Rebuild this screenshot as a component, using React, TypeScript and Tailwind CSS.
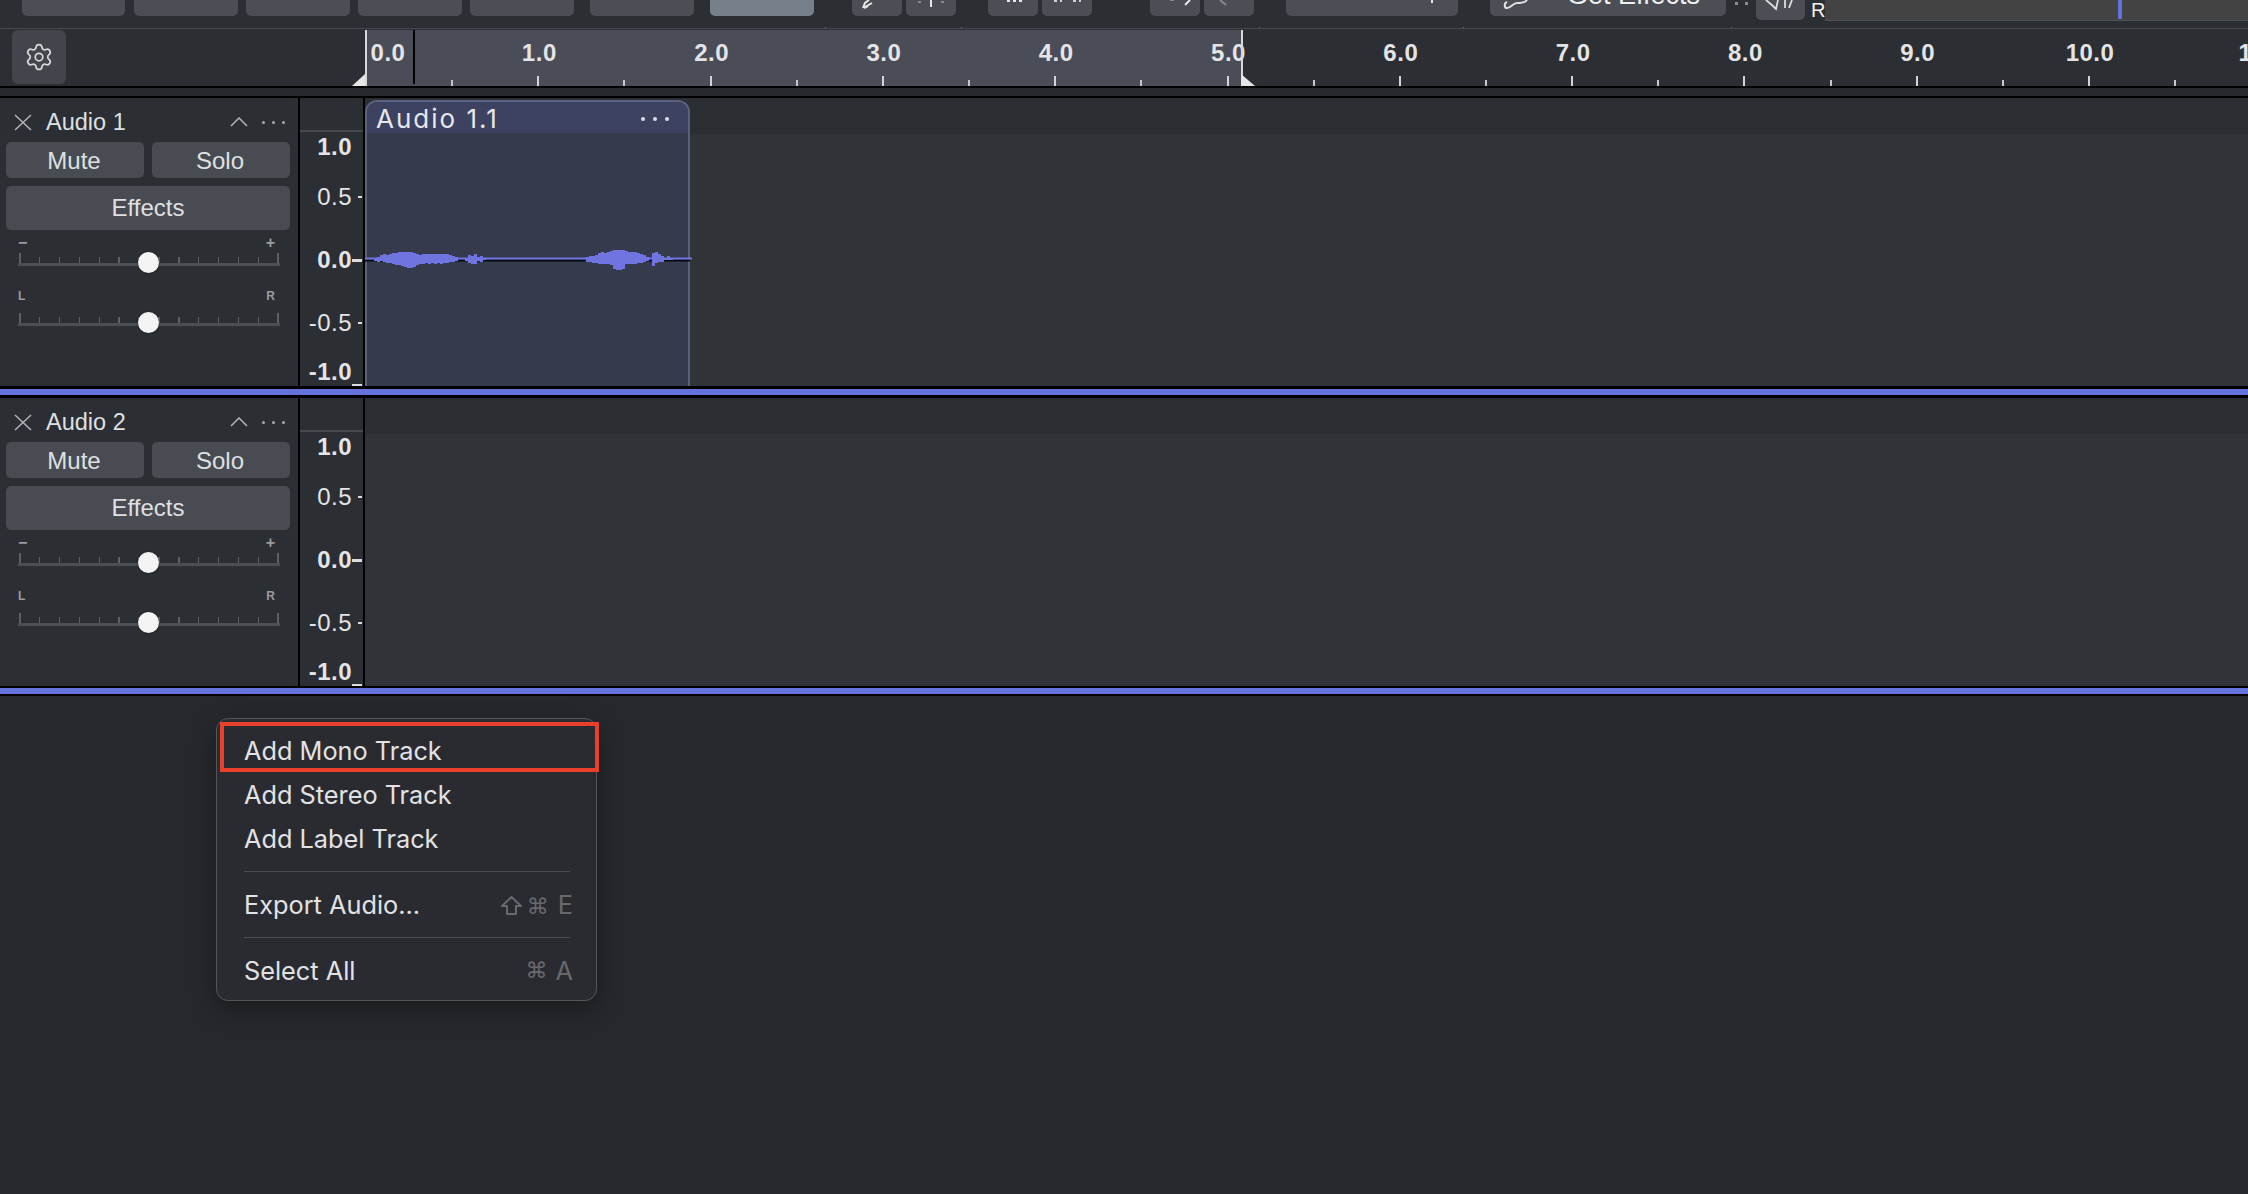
import { Settings } from "lucide-react";
import type { ReactNode } from "react";

const TICK_STEP = 172.3;
const rulerLabels = [0, 1, 2, 3, 4, 5, 6, 7, 8, 9, 10, 11];
const scaleLabels = [
  { text: "1.0", top: 37, bold: true },
  { text: "0.5", top: 87, bold: false },
  { text: "0.0", top: 150, bold: true },
  { text: "-0.5", top: 213, bold: false },
  { text: "-1.0", top: 262, bold: true },
];
const scaleMarks = [
  { top: 98, width: 4, left: 58 },
  { top: 161, width: 10, left: 52 },
  { top: 224, width: 4, left: 58 },
  { top: 286, width: 10, left: 52 },
];
// [x, up, down] around the zero line, 3px wide columns
const waveColumns = [
  [374, 1, 2], [377, 2, 3], [380, 4, 2], [383, 5, 3], [386, 4, 4], [389, 5, 4], [392, 6, 5], [395, 6, 6],
  [398, 7, 6], [401, 7, 7], [404, 7, 8], [407, 7, 9], [410, 7, 9], [413, 6, 8], [416, 5, 6], [419, 4, 5],
  [422, 5, 5], [425, 5, 4], [428, 5, 5], [431, 5, 4], [434, 5, 5], [437, 5, 4], [440, 5, 5], [443, 5, 4],
  [446, 5, 4], [449, 4, 3], [452, 3, 3], [455, 2, 2],
  [465, 1, 2], [468, 4, 4], [471, 3, 5], [474, 5, 5], [477, 2, 2], [480, 3, 3], [483, 1, 1],
  [586, 2, 3], [589, 3, 3], [592, 3, 4], [595, 4, 4], [598, 6, 5], [601, 7, 5], [604, 6, 5], [607, 7, 5],
  [610, 8, 6], [613, 9, 10], [616, 9, 11], [619, 9, 11], [622, 9, 10], [625, 8, 5], [628, 7, 5], [631, 7, 5],
  [634, 7, 5], [637, 6, 4], [640, 5, 4], [643, 4, 3], [646, 2, 2],
  [652, 6, 7], [655, 7, 4], [658, 5, 3], [661, 3, 3], [664, 1, 1], [667, 3, 1], [670, 1, 1],
];

function ToolButton({ className, children }: { className: string; children?: ReactNode }) {
  return (
    <div className={`relative h-4 shrink-0 overflow-hidden rounded-b-[5px] bg-[#4b4e55] ${className}`}>{children}</div>
  );
}

function Toolbar() {
  return (
    <div className="relative flex h-[29px] items-start border-b border-[#45484d] pl-[22px] shrink-0">
      <ToolButton className="w-[103px]" />
      <ToolButton className="ml-[9px] w-[104px]" />
      <ToolButton className="ml-2 w-[104px]" />
      <ToolButton className="ml-2 w-[104px]" />
      <ToolButton className="ml-2 w-[104px]" />
      <ToolButton className="ml-4 w-[104px]" />
      <ToolButton className="ml-4 w-[104px] bg-[#76808a]" />
      <ToolButton className="ml-[38px] w-[50px]">
        <svg width="50" height="16" fill="none" stroke="#e8e8e8" strokeWidth="2">
          <path d="M11 8 L13 3 L17 0 M13 7 L20 3 M12 8 L16 6" />
        </svg>
      </ToolButton>
      <ToolButton className="ml-1 w-[50px]">
        <svg width="50" height="16" fill="none">
          <path d="M25 0 V7" stroke="#e8e8e8" strokeWidth="2" />
          <path d="M12 2 H15 M35 2 H38" stroke="#85888e" strokeWidth="2" />
        </svg>
      </ToolButton>
      <ToolButton className="ml-8 w-[50px]">
        <svg width="50" height="16" fill="none">
          <path d="M19 1 H22 M25 1 H28 M31 1 H34" stroke="#e8e8e8" strokeWidth="2" />
        </svg>
      </ToolButton>
      <ToolButton className="ml-1 w-[50px]">
        <svg width="50" height="16" fill="none">
          <path d="M12 1 H15 M18 1 H20 M31 1 H34 M37 1 H39" stroke="#d0d0d0" strokeWidth="2" />
        </svg>
      </ToolButton>
      <ToolButton className="ml-[58px] w-[50px]">
        <svg width="50" height="16" fill="none">
          <path d="M40 0 L35 5" stroke="#e8e8e8" strokeWidth="2" />
          <path d="M20 0 H24" stroke="#85888e" strokeWidth="2" />
        </svg>
      </ToolButton>
      <ToolButton className="ml-1 w-[50px]">
        <svg width="50" height="16" fill="none">
          <path d="M16 0 L22 5" stroke="#85888e" strokeWidth="2" />
        </svg>
      </ToolButton>
      <ToolButton className="ml-8 w-[172px]">
        <div className="absolute left-[145px] top-0 h-[3px] w-[2px] bg-[#e8e8e8]" />
      </ToolButton>
      <ToolButton className="ml-8 flex w-[236px] items-end pb-[7px]">
        <svg className="absolute left-[13px] top-0" width="28" height="16" fill="none" stroke="#e0e0e0" strokeWidth="2">
          <path d="M24 0 C22 3 18 3 14 3 C10 3 8 8 4 8 C1 8 1 3 4 2" />
        </svg>
        <span className="ml-[77px] whitespace-nowrap text-[27px] leading-[27px] text-[#f0f0f0]">Get Effects</span>
      </ToolButton>
      <div className="ml-[9px] flex gap-[7px] pt-[2px]">
        <div className="h-[3px] w-[3px] bg-[#8a8d92]" />
        <div className="h-[3px] w-[3px] bg-[#8a8d92]" />
      </div>
      <div className="relative ml-[8px] h-5 w-[49px] shrink-0 overflow-hidden rounded-b-[5px] bg-[#4b4e55]">
        <svg width="49" height="20" fill="none" stroke="#dcdcdc" strokeWidth="1.8">
          <path d="M10 0 L17 6 L20 9 L22 0 M29 0 V8 M36 0 L33 8" />
        </svg>
      </div>
      <span className="ml-[6px] text-[20px] leading-[20px] text-[#f2f2f2]">R</span>
      <div className="relative h-[21px] flex-1 border-b border-[#4d5058] bg-[#434343]">
        <div className="absolute left-[293px] top-0 h-[19px] w-[4px] bg-[#6672dc]" />
      </div>
      <div className="absolute left-[825px] top-[27px] h-px w-px bg-[#6a6d72]" />
      <div className="absolute left-[961px] top-[27px] h-px w-px bg-[#6a6d72]" />
      <div className="absolute left-[1259px] top-[27px] h-px w-px bg-[#6a6d72]" />
      <div className="absolute left-[1463px] top-[27px] h-px w-px bg-[#6a6d72]" />
      <div className="absolute left-[1731px] top-[27px] h-px w-px bg-[#6a6d72]" />
    </div>
  );
}

function Ruler() {
  return (
    <div className="mt-px flex h-[56px] shrink-0">
      <div className="w-[365px] shrink-0 pl-3">
        <div className="flex h-[54px] w-[54px] items-center justify-center rounded-[6px] bg-[#42454c]">
          <Settings size={30} strokeWidth={1.4} color="#d8d8d8" />
        </div>
      </div>
      <div className="relative flex-1">
        <div className="absolute left-0 top-0 h-full w-[876px] bg-[#4a4c57]" />
        {rulerLabels.map((value) => (
          <span
            key={value}
            className="absolute top-[11px] -translate-x-1/2 whitespace-nowrap text-[24px] font-bold leading-[24px] tracking-[0.5px] text-[#e4e4e6]"
            style={{ left: value === 0 ? 23 : value * TICK_STEP + 2 }}
          >
            {value.toFixed(1)}
          </span>
        ))}
        {rulerLabels.map((value) => (
          <div key={value}>
            {value > 0 && <div className="absolute bottom-0 h-[10px] w-[2px] bg-[#d4d4d6]" style={{ left: value * TICK_STEP }} />}
            <div className="absolute bottom-0 h-[6px] w-[2px] bg-[#c8c8ca]" style={{ left: (value + 0.5) * TICK_STEP }} />
          </div>
        ))}
        <div className="absolute left-0 top-0 h-full w-[2px] bg-[#d8d8da]" />
        <div className="absolute left-[48px] top-0 h-[54px] w-[2px] bg-black" />
        <div className="absolute left-[876px] top-0 h-full w-[2px] bg-[#d8d8da]" />
        <svg className="absolute bottom-0 left-[-13px]" width="13" height="12">
          <path d="M13 0 V12 H0 Z" fill="#e6e6e6" />
        </svg>
        <svg className="absolute bottom-0 left-[876px]" width="14" height="12">
          <path d="M0 0 V12 H14 Z" fill="#e6e6e6" />
        </svg>
      </div>
    </div>
  );
}

function Slider({ left, right, labelClass, gap }: { left: string; right: string; labelClass: string; gap: string }) {
  const ticks = Array.from({ length: 14 }, (_, i) => i);
  return (
    <div className="w-[262px]">
      <div className={`flex h-[14px] items-center justify-between pr-[5px] text-[#9a9ca0] ${labelClass}`}>
        <span>{left}</span>
        <span>{right}</span>
      </div>
      <div className={`relative ${gap}`}>
        <div className="flex h-[10px] items-end justify-between px-px">
          {ticks.map((i) => (
            <div key={i} className={`w-[1.5px] bg-[#5d6067] ${i === 0 || i === 13 ? "h-[10px]" : "h-[6px]"}`} />
          ))}
        </div>
        <div className="h-[3px] w-full bg-[#4b4e55]" />
        <div className="absolute left-[120px] top-[-1px] h-[21px] w-[21px] rounded-full bg-[#f4f4f4] shadow-[0_0_2px_rgba(0,0,0,0.6)]" />
      </div>
    </div>
  );
}

function TrackHeader({ name }: { name: string }) {
  return (
    <div className="w-[298px] shrink-0 pl-[6px]">
      <div className="flex h-[44px] items-center pt-[4px]">
        <svg className="ml-[8px]" width="18" height="17" fill="none" stroke="#b4b5b8" strokeWidth="1.5">
          <path d="M1 1 L17 16 M17 1 L1 16" />
        </svg>
        <span className="ml-[14px] text-[23.5px] leading-[26px] text-[#dfe0e2]">{name}</span>
        <svg className="ml-auto" width="18" height="10" fill="none" stroke="#b4b5b8" strokeWidth="1.5">
          <path d="M1 9 L9 1 L17 9" />
        </svg>
        <div className="ml-[14px] mr-[13px] flex gap-[7px]">
          <div className="h-[3px] w-[3px] rounded-full bg-[#a8a9ac]" />
          <div className="h-[3px] w-[3px] rounded-full bg-[#a8a9ac]" />
          <div className="h-[3px] w-[3px] rounded-full bg-[#a8a9ac]" />
        </div>
      </div>
      <div className="flex w-[284px] gap-2">
        <div className="flex h-9 flex-1 items-center justify-center rounded-[5px] bg-[#484b52] pt-px pr-[2px] text-[24px] text-[#dfe0e2]">Mute</div>
        <div className="flex h-9 flex-1 items-center justify-center rounded-[5px] bg-[#484b52] pt-px pr-[2px] text-[24px] text-[#dfe0e2]">Solo</div>
      </div>
      <div className="mt-2 flex h-11 w-[284px] items-center justify-center rounded-[5px] bg-[#484b52] text-[24px] text-[#dfe0e2]">
        Effects
      </div>
      <div className="ml-3 mt-[6px]">
        <Slider left="−" right="+" labelClass="text-[16px] font-bold" gap="mt-[3px]" />
      </div>
      <div className="ml-3 mt-[23px]">
        <Slider left="L" right="R" labelClass="text-[12px] font-bold" gap="mt-[10px]" />
      </div>
    </div>
  );
}

function Scale() {
  return (
    <div className="relative w-[67px] shrink-0 border-x-2 border-black">
      <div className="h-[34px] border-b-2 border-[#45484d]" />
      {scaleLabels.map((label) => (
        <span
          key={label.text}
          className={`absolute right-[11px] text-[24px] leading-[24px] tracking-[0.5px] text-[#e4e4e6] ${label.bold ? "font-bold" : "font-normal"}`}
          style={{ top: label.top }}
        >
          {label.text}
        </span>
      ))}
      {scaleMarks.map((mark) => (
        <div
          key={mark.top}
          className={`absolute bg-[#dcdcde] ${mark.top === 161 ? "h-[3px]" : "h-[2px]"}`}
          style={{ top: mark.top, left: mark.left, width: mark.width }}
        />
      ))}
    </div>
  );
}

function Waveform() {
  return (
    <svg className="absolute left-[-2px] top-[138px] overflow-visible" width="330" height="40" viewBox="365 240 330 40">
      <rect x="365" y="259.5" width="325" height="2" fill="#08090c" />
      <rect x="365" y="257.5" width="327" height="2" fill="#6f74e0" />
      {waveColumns.map(([x, up, down]) => (
        <rect key={x} x={x} y={259 - up} width="3" height={up + down} fill="#6f74e0" />
      ))}
    </svg>
  );
}

function Clip() {
  return (
    <div className="absolute left-0 top-[2px] flex h-[286px] w-[325px] flex-col rounded-t-[12px] border-x-2 border-t-2 border-[#5a6180] bg-[#353a4d]">
      <div className="flex h-[31px] shrink-0 items-center rounded-t-[10px] bg-[#3d4260] pl-[9px] pr-[19px] pt-[2px]">
        <span className="font-['Inter',sans-serif] text-[26px] leading-[28px] tracking-[2px] text-[#e6e7ec]">Audio 1.1</span>
        <div className="ml-auto flex gap-[8px]">
          <div className="h-1 w-1 rounded-full bg-[#dcdde2]" />
          <div className="h-1 w-1 rounded-full bg-[#dcdde2]" />
          <div className="h-1 w-1 rounded-full bg-[#dcdde2]" />
        </div>
      </div>
      <Waveform />
    </div>
  );
}

function Track({ name, hasClip }: { name: string; hasClip?: boolean }) {
  return (
    <div className="flex h-[288px] shrink-0">
      <TrackHeader name={name} />
      <Scale />
      <div className="relative flex-1 bg-[#303338]">
        <div className="h-[36px] bg-[#2b2e32]" />
        {hasClip && <Clip />}
      </div>
    </div>
  );
}

function MenuItem({ label, shortcut }: { label: string; shortcut?: ReactNode }) {
  return (
    <div className="flex h-[44px] items-center justify-between">
      <span>{label}</span>
      {shortcut && <span className="flex items-center text-[#68696d]">{shortcut}</span>}
    </div>
  );
}

function Command() {
  return <span className="font-['DejaVu_Sans',sans-serif] text-[22px] leading-none">⌘</span>;
}

function ContextMenu() {
  return (
    <div className="absolute left-[216px] top-[22px] w-[381px] rounded-[12px] border border-[#55565a] bg-[#2a2b30] pb-[7px] pl-[27px] pr-[26px] pt-[10px] font-['Inter',sans-serif] text-[25.3px] text-[#e2e2e4] shadow-[0_8px_24px_rgba(0,0,0,0.3)]">
      <MenuItem label="Add Mono Track" />
      <MenuItem label="Add Stereo Track" />
      <MenuItem label="Add Label Track" />
      <div className="mb-[11px] mt-[10px] h-px bg-[#4b4c50]" />
      <MenuItem
        label="Export Audio..."
        shortcut={
          <>
            <svg width="23" height="21" fill="none" stroke="#68696d" strokeWidth="2" strokeLinejoin="round">
              <path d="M11.5 2 L21 11 H16 V19 H7 V11 H2 Z" />
            </svg>
            <span className="ml-[4px]">
              <Command />
            </span>
            <span className="ml-[9px] mr-[-3px]">E</span>
          </>
        }
      />
      <div className="mb-[11px] mt-[10px] h-px bg-[#4b4c50]" />
      <MenuItem
        label="Select All"
        shortcut={
          <>
            <Command />
            <span className="ml-[8px] mr-[-3px]">A</span>
          </>
        }
      />
      <div className="absolute left-[3px] top-[3px] h-[50px] w-[379px] border-4 border-[#e8402a]" />
    </div>
  );
}

export default function App() {
  return (
    <div className="flex h-[1194px] w-[2248px] flex-col overflow-hidden bg-[#2b2e33] font-['Liberation_Sans',sans-serif]">
      <Toolbar />
      <Ruler />
      <div className="h-[12px] shrink-0 border-y-2 border-black bg-[#26292d]" />
      <Track name="Audio 1" hasClip />
      <div className="shrink-0 border-y-[3px] border-black bg-[#6672dc]">
        <div className="h-[6px]" />
      </div>
      <Track name="Audio 2" />
      <div className="shrink-0 border-y-2 border-black bg-[#6672dc]">
        <div className="h-[6px]" />
      </div>
      <div className="relative flex-1 bg-[#25282c]">
        <ContextMenu />
      </div>
    </div>
  );
}
